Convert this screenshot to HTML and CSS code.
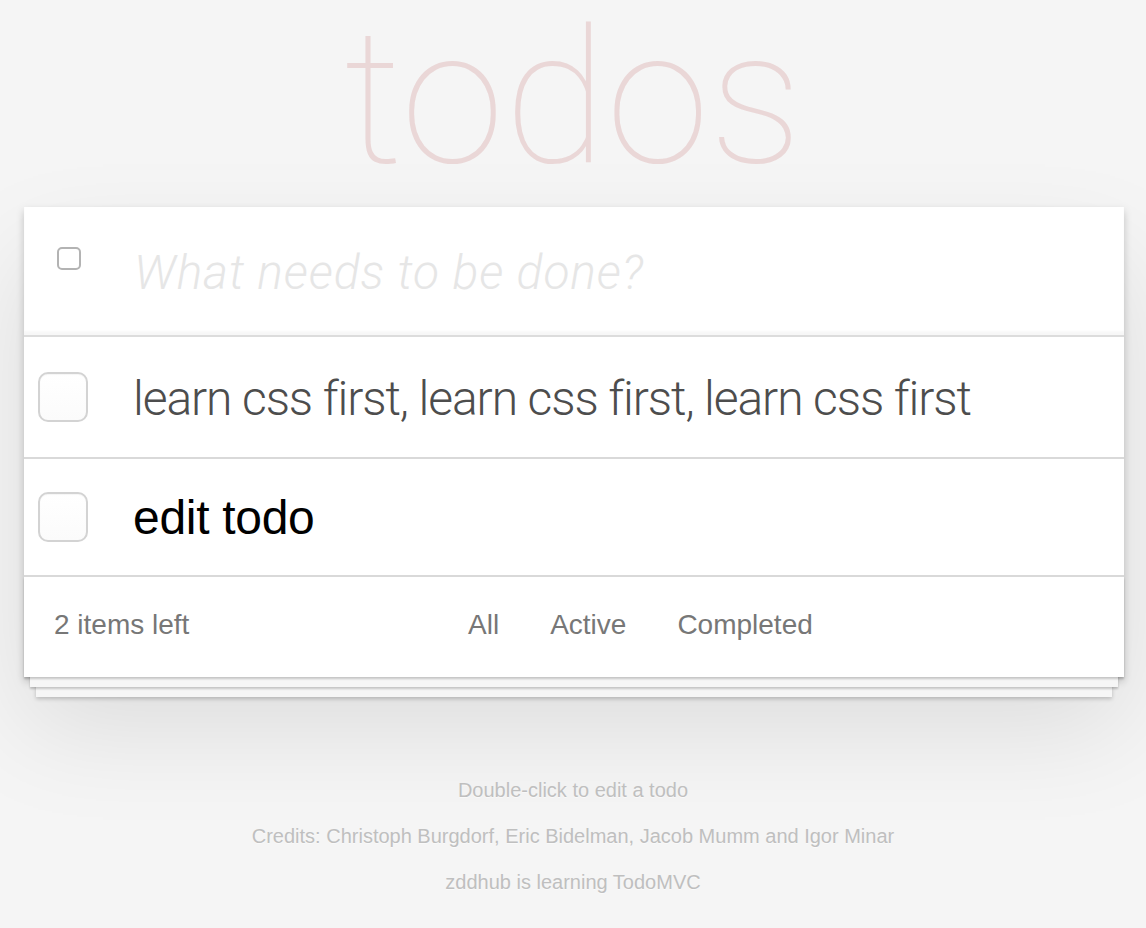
FILE: index.html
```html
<!DOCTYPE html>
<html lang="en">
<head>
<meta charset="utf-8">
<title>todos</title>
<link rel="stylesheet" href="styles.css">
</head>
<body>
<h1 class="title">todos</h1>
<section class="app">
  <header class="new-row">
    <span class="check-small"></span>
    <input class="new-todo" type="text" placeholder="What needs to be done?">
  </header>
  <ul class="list">
    <li class="item item-first"><span class="check"></span><label class="label">learn css first, learn css first, learn css first</label></li>
    <li class="item item-edit"><span class="check"></span><label class="label label-edit">edit todo</label></li>
  </ul>
  <footer class="footer">
    <span class="count">2 items left</span>
    <ul class="filters">
      <li><a class="filter" href="#">All</a></li>
      <li><a class="filter" href="#">Active</a></li>
      <li><a class="filter" href="#">Completed</a></li>
    </ul>
  </footer>
</section>
<footer class="info">
  <p class="info-line">Double-click to edit a todo</p>
  <p class="info-line">Credits: Christoph Burgdorf, Eric Bidelman, Jacob Mumm and Igor Minar</p>
  <p class="info-line">zddhub is learning TodoMVC</p>
</footer>
</body>
</html>
```

FILE: styles.css
```css
html, body {
  margin: 0;
  padding: 0;
}
body {
  background: #f5f5f5;
  color: #4d4d4d;
  font-family: "Liberation Sans", Arial, sans-serif;
  font-size: 28px;
}
.title {
  margin: 0;
  padding: 5px 0 15px;
  font-family: Roboto, "Liberation Sans", sans-serif;
  font-weight: 100;
  font-size: 187px;
  line-height: 187px;
  text-align: center;
  color: rgba(175, 47, 47, 0.15);
}
.app {
  width: 1100px;
  margin: 0 22px 0 24px;
  background: #fff;
  box-shadow: 0 4px 8px 0 rgba(0, 0, 0, 0.2), 0 50px 100px 0 rgba(0, 0, 0, 0.1);
}
.new-row {
  display: flex;
  align-items: center;
  height: 128px;
  box-shadow: inset 0 -4px 2px rgba(0, 0, 0, 0.03);
}
.check-small {
  width: 20px;
  height: 19px;
  margin: -26px 0 0 33px;
  border: 2px solid #b3b3b3;
  border-radius: 5px;
  background: #fff;
  flex: none;
}
.new-todo {
  flex: 1;
  margin: 4px 0 0 53px;
  border: 0;
  outline: none;
  padding: 0;
  background: transparent;
  font-family: Roboto, "Liberation Sans", sans-serif;
  font-weight: 300;
  font-size: 48px;
  line-height: 60px;
  letter-spacing: 0.9px;
  color: #4d4d4d;
}
.new-todo::placeholder {
  font-style: italic;
  color: #e6e6e6;
}
.list {
  margin: 0;
  padding: 0;
  list-style: none;
  border-top: 2px solid #dcdcdc;
}
.item {
  display: flex;
  align-items: center;
  border-bottom: 2px solid #d9d9d9;
  padding-left: 14px;
}
.item-first {
  height: 120px;
}
.item-edit {
  height: 116px;
}
.check {
  flex: none;
  width: 46px;
  height: 46px;
  border: 2px solid #d3d3d3;
  border-radius: 10px;
  background: linear-gradient(#fff, #fbfbfb);
  box-shadow: inset 0 1px 1px rgba(0, 0, 0, 0.04);
}
.label {
  margin: 4px 0 0 45px;
  font-family: Roboto, "Liberation Sans", sans-serif;
  font-weight: 300;
  font-size: 48px;
  line-height: 58px;
  letter-spacing: -1.1px;
  color: #4d4d4d;
}
.label-edit {
  margin-top: 2px;
  font-family: "Liberation Sans", Arial, sans-serif;
  font-weight: 400;
  letter-spacing: -0.3px;
  color: #000;
}
.footer {
  display: flex;
  align-items: center;
  height: 96px;
  padding: 0 0 4px 30px;
  color: #777;
  box-shadow: 0 2px 2px rgba(0, 0, 0, 0.2),
    0 16px 0 -6px #f6f6f6,
    0 18px 2px -6px rgba(0, 0, 0, 0.2),
    0 32px 0 -12px #f6f6f6,
    0 34px 4px -12px rgba(0, 0, 0, 0.2);
}
.count {
  width: 414px;
  flex: none;
}
.filters {
  display: flex;
  gap: 51px;
  margin: 0;
  padding: 0;
  list-style: none;
}
.filter {
  color: inherit;
  text-decoration: none;
}
.info {
  margin-top: 103px;
  text-align: center;
  color: #bfbfbf;
  font-size: 20px;
  text-shadow: 0 1px 0 rgba(255, 255, 255, 0.5);
}
.info-line {
  margin: 0 0 26px;
  line-height: 20px;
}
```
